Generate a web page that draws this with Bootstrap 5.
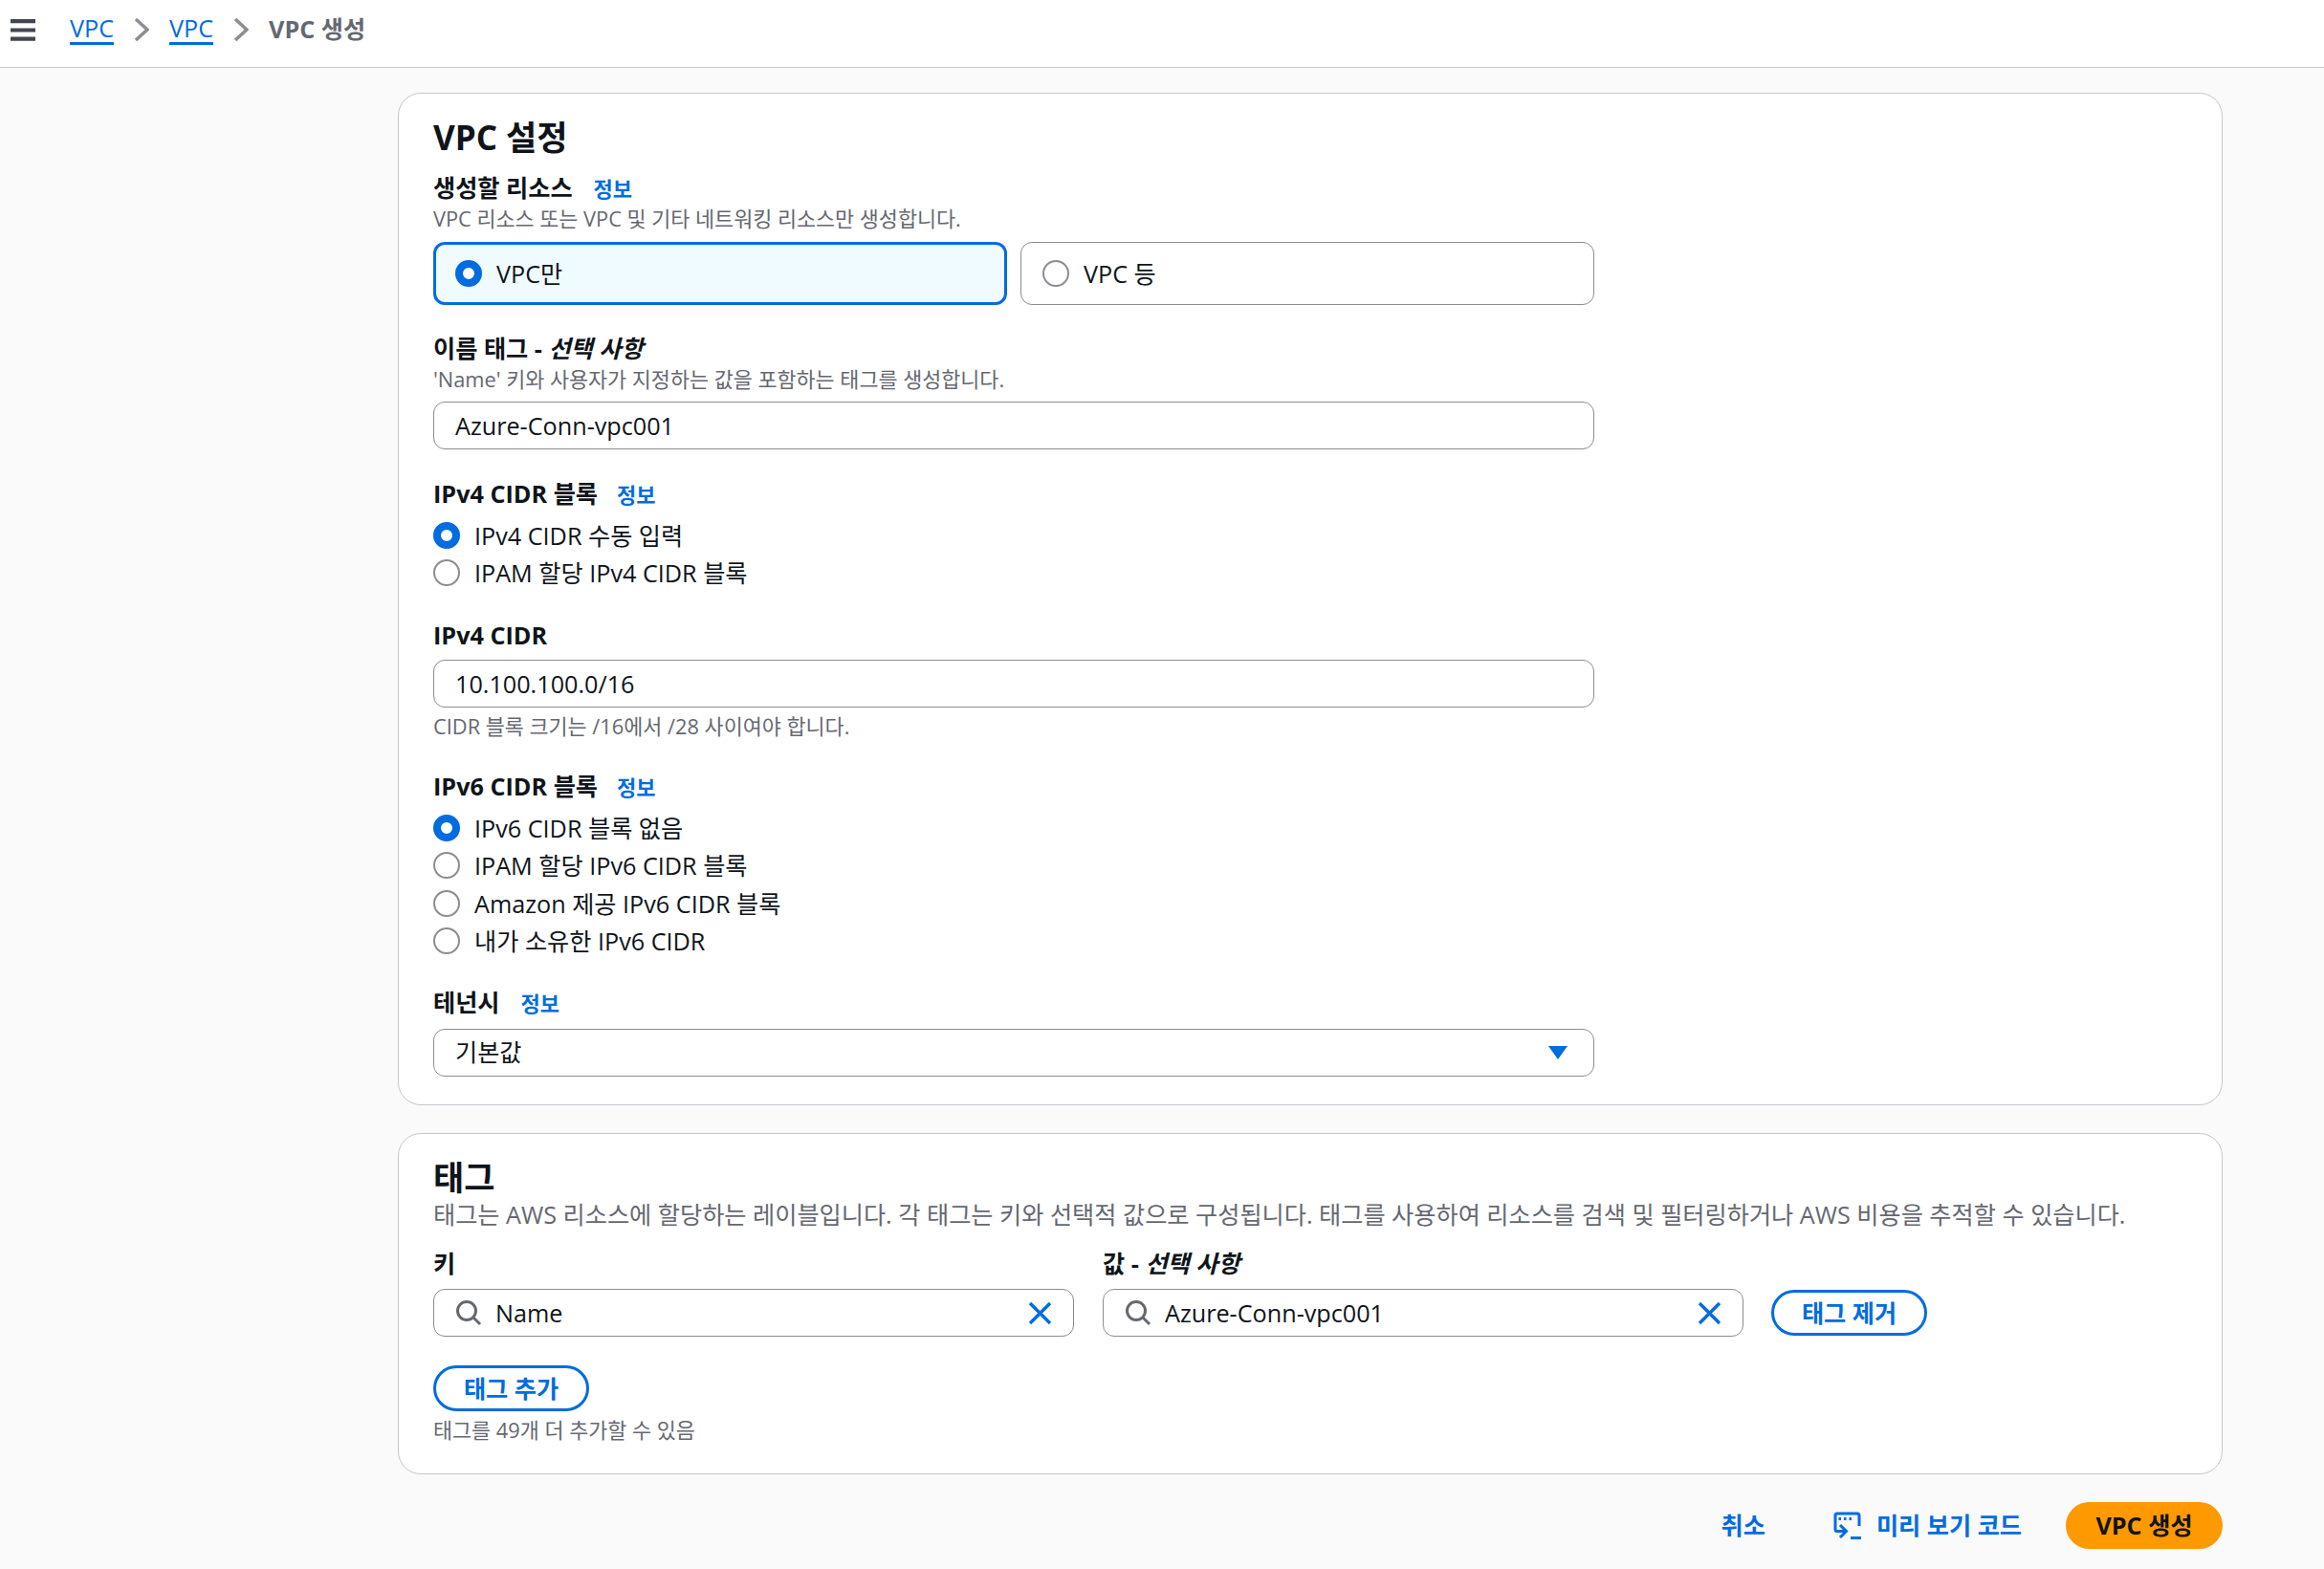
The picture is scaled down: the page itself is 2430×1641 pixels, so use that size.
<!DOCTYPE html>
<html lang="ko">
<head>
<meta charset="utf-8">
<title>VPC 생성</title>
<link href="https://cdn.jsdelivr.net/npm/bootstrap@5.3.0/dist/css/bootstrap.min.css" rel="stylesheet">
<style>
:root{--aws-blue:#006ce0;--aws-ink:#0f141a;--aws-muted:#656871;--aws-line:#c6c6cd;--aws-input:#8c8c94}
html,body{height:100%}
body{background:#fafafa;color:var(--aws-ink);font-family:"Open Sans","Noto Sans CJK KR",sans-serif;font-size:25.2px;line-height:30px;overflow:hidden}
a{color:var(--aws-blue);text-decoration:none}
.top-bar{height:71px;background:#fff;border-bottom:1px solid var(--aws-line);padding:0 0 0 11px;gap:36px}
.crumbs{margin:0;font-size:25.2px;line-height:30px;gap:21px;padding-bottom:8px}
.crumbs a{border-bottom:3px solid var(--aws-blue);display:block;line-height:29px}
.crumbs .here{color:var(--aws-muted);font-weight:700;padding-bottom:2px}
.menu-ico{margin-bottom:8px}
.page-wrap{margin:26px 106px 0 416px}
.panel{background:#fff;border:1px solid var(--aws-line);border-radius:24px;padding:28px 36px 0}
.panel-a{height:1059px}
.panel-b{height:357px;margin-top:29px;padding-top:28px}
.panel-title{font-size:35px;line-height:36px;font-weight:700;margin:0}
.fld-label{font-weight:700;display:block;margin:0}
.info{font-size:22px;font-weight:700;margin-left:22px}
.info.tight{margin-left:20px}
.fld-desc{font-size:21.8px;line-height:24px;color:var(--aws-muted);margin:0}
.tile{width:600px;height:66px;border:1px solid var(--aws-input);border-radius:12px;padding:0 22px;margin:0;gap:15px}
.tile.on{border:3px solid var(--aws-blue);background:#f0fbff;padding:0 20px}
.form-check-input.rad{width:28px;height:28px;margin:0;flex:none;border:2px solid var(--aws-input);background-image:none;background-color:#fff}
.form-check-input.rad:checked{border:8px solid var(--aws-blue);background-color:#fff;background-image:none}
.opt{height:39.5px;margin:0;padding:0;gap:15px;display:flex;align-items:center;min-height:0}
.form-control.fld,.form-select.fld{height:50px;border:1px solid var(--aws-input);border-radius:12px;padding:0 22px;font-size:25.2px;color:var(--aws-ink);box-shadow:none}
.form-select.fld{background-image:url("data:image/svg+xml,%3Csvg xmlns='http://www.w3.org/2000/svg' viewBox='0 0 20 14'%3E%3Cpath fill='%23006ce0' d='M0 0h20L10 14z'/%3E%3C/svg%3E");background-size:20px 14px;background-position:right 27px center}
.w-main{width:1214px}
.srch{height:50px;border:1px solid var(--aws-input);border-radius:12px;background:#fff;padding:0 22px 0 23px;gap:14px;width:670px}
.srch input{border:0;outline:0;flex:1;min-width:0;font-size:25.2px;color:var(--aws-ink);background:transparent;padding:0}
.pill{border:3px solid var(--aws-blue);border-radius:30px;color:var(--aws-blue);background:#fff;font-weight:700;font-size:25.2px;line-height:26px;padding:0;height:48px;width:163px}
.act-text{color:var(--aws-blue);font-weight:700;font-size:25.2px;padding:0 0 2px;border:0;background:none;line-height:30px}
.act-main{background:#ff9900;color:var(--aws-ink);font-weight:700;font-size:25.2px;border:0;border-radius:30px;width:164px;height:49px;padding:0}
.act-row{margin-top:29px;gap:0}
</style>
</head>
<body>
<header class="top-bar d-flex align-items-center">
  <svg class="menu-ico" width="26" height="23" viewBox="0 0 26 23" aria-hidden="true"><path d="M0 2.2h26M0 11.5h26M0 20.6h26" stroke="#424650" stroke-width="4.2" fill="none"/></svg>
  <nav class="crumbs d-flex align-items-center">
    <a href="#">VPC</a>
    <svg width="16" height="26" viewBox="0 0 16 26" aria-hidden="true"><path d="M2 2l12 11L2 24" stroke="#8c8c94" stroke-width="3.5" fill="none"/></svg>
    <a href="#">VPC</a>
    <svg width="16" height="26" viewBox="0 0 16 26" aria-hidden="true"><path d="M2 2l12 11L2 24" stroke="#8c8c94" stroke-width="3.5" fill="none"/></svg>
    <span class="here">VPC 생성</span>
  </nav>
</header>
<main class="page-wrap">
  <section class="panel panel-a">
    <h2 class="panel-title">VPC 설정</h2>
    <div class="fld-label" style="margin-top:19px">생성할 리소스<a class="info" href="#">정보</a></div>
    <p class="fld-desc" style="margin-top:5px">VPC 리소스 또는 VPC 및 기타 네트워킹 리소스만 생성합니다.</p>
    <div class="d-flex" style="gap:14px;margin-top:12px">
      <label class="tile on d-flex align-items-center"><input class="form-check-input rad" type="radio" name="r0" checked>VPC만</label>
      <label class="tile d-flex align-items-center"><input class="form-check-input rad" type="radio" name="r0">VPC 등</label>
    </div>
    <div class="fld-label" style="margin-top:30px">이름 태그 - <em>선택 사항</em></div>
    <p class="fld-desc" style="margin-top:6px">'Name' 키와 사용자가 지정하는 값을 포함하는 태그를 생성합니다.</p>
    <input class="form-control fld w-main" style="margin-top:11px" value="Azure-Conn-vpc001">
    <div class="fld-label" style="margin-top:31px">IPv4 CIDR 블록<a class="info tight" href="#">정보</a></div>
    <div style="margin-top:8px">
      <label class="opt"><input class="form-check-input rad" type="radio" name="r1" checked>IPv4 CIDR 수동 입력</label>
      <label class="opt"><input class="form-check-input rad" type="radio" name="r1">IPAM 할당 IPv4 CIDR 블록</label>
    </div>
    <div class="fld-label" style="margin-top:30px">IPv4 CIDR</div>
    <input class="form-control fld w-main" style="margin-top:11px" value="10.100.100.0/16">
    <p class="fld-desc" style="margin-top:8px">CIDR 블록 크기는 /16에서 /28 사이여야 합니다.</p>
    <div class="fld-label" style="margin-top:35px">IPv6 CIDR 블록<a class="info tight" href="#">정보</a></div>
    <div style="margin-top:8px">
      <label class="opt"><input class="form-check-input rad" type="radio" name="r2" checked>IPv6 CIDR 블록 없음</label>
      <label class="opt"><input class="form-check-input rad" type="radio" name="r2">IPAM 할당 IPv6 CIDR 블록</label>
      <label class="opt"><input class="form-check-input rad" type="radio" name="r2">Amazon 제공 IPv6 CIDR 블록</label>
      <label class="opt"><input class="form-check-input rad" type="radio" name="r2">내가 소유한 IPv6 CIDR</label>
    </div>
    <div class="fld-label" style="margin-top:29px">테넌시<a class="info" href="#">정보</a></div>
    <select class="form-select fld w-main" style="margin-top:12px"><option>기본값</option></select>
  </section>
  <section class="panel panel-b">
    <h2 class="panel-title">태그</h2>
    <p class="m-0" style="margin-top:5px !important;color:var(--aws-muted)">태그는 AWS 리소스에 할당하는 레이블입니다. 각 태그는 키와 선택적 값으로 구성됩니다. 태그를 사용하여 리소스를 검색 및 필터링하거나 AWS 비용을 추적할 수 있습니다.</p>
    <div class="d-flex align-items-end" style="gap:30px;margin-top:21px">
      <div><div class="fld-label">키</div>
        <div class="srch d-flex align-items-center" style="margin-top:12px">
          <svg width="27" height="27" viewBox="0 0 27 27" aria-hidden="true"><circle cx="11" cy="11" r="9.5" fill="none" stroke="#656871" stroke-width="3"/><path d="M17.5 17.5l7.5 7.5" stroke="#656871" stroke-width="3"/></svg>
          <input value="Name"><svg width="25" height="25" viewBox="0 0 25 25" aria-hidden="true"><path d="M2 2l21 21M23 2L2 23" stroke="#006ce0" stroke-width="3.4"/></svg>
        </div></div>
      <div><div class="fld-label">값 - <em>선택 사항</em></div>
        <div class="srch d-flex align-items-center" style="margin-top:12px">
          <svg width="27" height="27" viewBox="0 0 27 27" aria-hidden="true"><circle cx="11" cy="11" r="9.5" fill="none" stroke="#656871" stroke-width="3"/><path d="M17.5 17.5l7.5 7.5" stroke="#656871" stroke-width="3"/></svg>
          <input value="Azure-Conn-vpc001"><svg width="25" height="25" viewBox="0 0 25 25" aria-hidden="true"><path d="M2 2l21 21M23 2L2 23" stroke="#006ce0" stroke-width="3.4"/></svg>
        </div></div>
      <button class="btn pill" type="button" style="margin-bottom:1px;margin-left:-1px">태그 제거</button>
    </div>
    <button class="btn pill d-block" style="margin-top:30px" type="button">태그 추가</button>
    <p class="fld-desc" style="margin-top:8px">태그를 49개 더 추가할 수 있음</p>
  </section>
  <div class="d-flex justify-content-end align-items-center act-row">
    <button class="act-text" type="button" style="margin-right:71px">취소</button>
    <button class="act-text d-flex align-items-center" type="button" style="gap:15px;margin-right:46px">
      <svg width="30" height="30" viewBox="0 0 30 30" aria-hidden="true"><path d="M27 16V5a2 2 0 0 0-2-2H4a2 2 0 0 0-2 2v14.500a2 2 0 0 0 2 2h9" fill="none" stroke="#006ce0" stroke-width="3"/><path d="M5.500 8.500h2.500M11 8.500h2.500M16.500 8.500h2.500" stroke="#006ce0" stroke-width="3"/><path d="M7 15l6.500 6.500L7 28" fill="none" stroke="#006ce0" stroke-width="3"/><path d="M18 28.500h11" stroke="#006ce0" stroke-width="3"/></svg>미리 보기 코드</button>
    <button class="btn act-main" type="button">VPC 생성</button>
  </div>
</main>
</body>
</html>
